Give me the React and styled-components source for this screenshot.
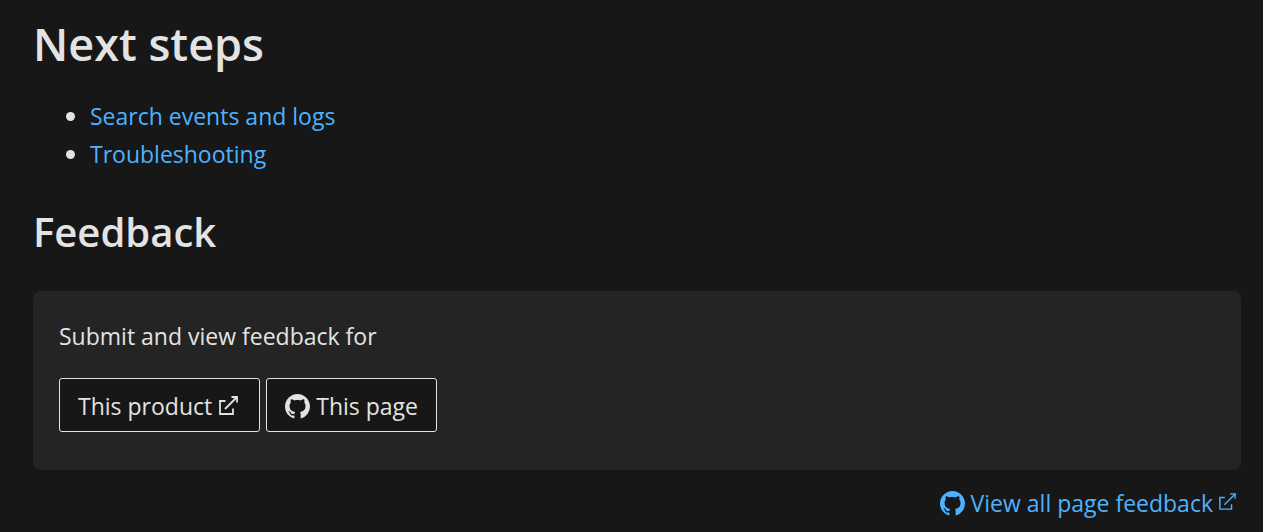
import React from 'react'
import styled, { createGlobalStyle } from 'styled-components'

const links = ['Search events and logs', 'Troubleshooting']

function ExternalIcon({ size, weight }) {
  return (
    <svg width={size} height={size} viewBox="0 0 19 19" fill="none" stroke="currentColor" strokeWidth={weight} aria-hidden="true">
      <path d="M6.500 5H1V18H14V12.500" />
      <path d="M12.500 1H18V6.500" />
      <path d="M18 1L6 13" />
    </svg>
  )
}

function GithubMark() {
  return (
    <svg width="25" height="25" viewBox="0 0 16 16" fill="currentColor" aria-hidden="true">
      <path d="M8 0C3.580 0 0 3.580 0 8c0 3.540 2.290 6.530 5.470 7.590.4.070.55-.17.55-.38 0-.19-.01-.82-.01-1.490-2.010.37-2.530-.49-2.690-.94-.09-.23-.48-.94-.82-1.130-.28-.15-.68-.52-.01-.53.63-.01 1.080.58 1.230.82.72 1.210 1.870.87 2.330.66.07-.52.28-.87.51-1.070-1.780-.2-3.640-.89-3.640-3.950 0-.87.31-1.590.82-2.150-.08-.2-.36-1.020.08-2.120 0 0 .67-.21 2.200.82.64-.18 1.320-.27 2-.27s1.360.09 2 .27c1.530-1.040 2.200-.82 2.200-.82.44 1.100.16 1.920.08 2.120.51.56.82 1.270.82 2.150 0 3.070-1.870 3.750-3.650 3.950.29.25.54.73.54 1.480 0 1.070-.01 1.930-.01 2.200 0 .21.15.46.55.38A8.010 8.010 0 0 0 16 8c0-4.420-3.580-8-8-8z" />
    </svg>
  )
}

function App() {
  return (
    <>
      <GlobalStyle />
      <Page>
        <Title>Next steps</Title>
        <List>
          {links.map(text => (
            <Item key={text}><Link href="#">{text}</Link></Item>
          ))}
        </List>
        <SubTitle>Feedback</SubTitle>
        <Card>
          <p>Submit and view feedback for</p>
          <Buttons>
            <Button type="button">This product <IconSlot><ExternalIcon size={19} weight={1.8} /></IconSlot></Button>
            <Button type="button"><GithubMark /> This page</Button>
          </Buttons>
        </Card>
        <Footer>
          <AllLink href="#"><GithubMark /> View all page feedback <IconSlot $raised><ExternalIcon size={17} weight={1.6} /></IconSlot></AllLink>
        </Footer>
      </Page>
    </>
  )
}

const GlobalStyle = createGlobalStyle`
  * {
    box-sizing: border-box;
  }
  body {
    margin: 0;
    background: #171717;
    color: #e3e3e3;
    font-family: 'Open Sans', 'Noto Sans', sans-serif;
    font-size: 23px;
    line-height: 38px;
  }
  h2, p, ul {
    margin: 0;
  }
`
const Page = styled.main`
  padding: 14px 22px 0 33px;
`
const Title = styled.h2`
  font-size: 45px;
  line-height: 60px;
  font-weight: 600;
`
const SubTitle = styled(Title)`
  font-size: 40px;
  margin-top: 29px;
`
const List = styled.ul`
  margin-top: 23px;
  padding-left: 33px;
  list-style: none;
`
const Item = styled.li`
  display: flex;
  align-items: center;
  gap: 15px;
  &::before {
    content: '';
    width: 9px;
    height: 9px;
    border-radius: 50%;
    background: #e3e3e3;
  }
`
const Link = styled.a`
  color: #4db2ff;
  text-decoration: none;
`
const Card = styled.section`
  margin-top: 29px;
  padding: 26px 26px 38px;
  border-radius: 8px;
  background: #242424;
`
const Buttons = styled.div`
  display: flex;
  gap: 6px;
  margin-top: 23px;
`
const Button = styled.button`
  display: flex;
  align-items: center;
  gap: 6px;
  height: 54px;
  padding: 2px 18px 0;
  border: 1px solid #e3e3e3;
  border-radius: 3px;
  background: #171717;
  color: #e3e3e3;
  font: inherit;
`
const IconSlot = styled.span`
  display: flex;
  padding: ${props => props.$raised ? '0 0 4px' : '0 3px 2px 1px'};
`
const Footer = styled.footer`
  display: flex;
  justify-content: flex-end;
  padding: 14px 5px 0 0;
`
const AllLink = styled(Link)`
  display: flex;
  align-items: center;
  gap: 6px;
`
export default App
